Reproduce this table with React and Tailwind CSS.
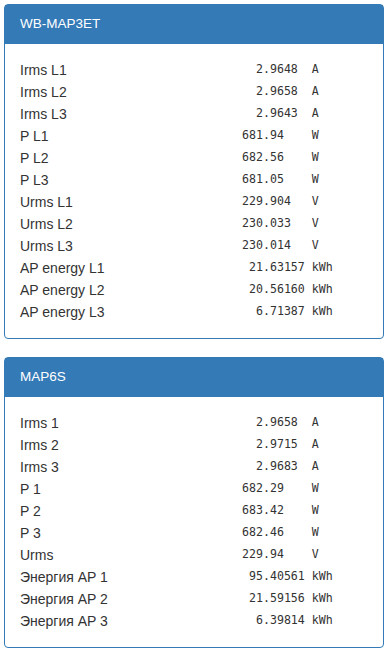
import React from 'react';

const panels = [
  {
    title: 'WB-MAP3ET',
    rows: [
      ['Irms L1', '2.9648', 'A'],
      ['Irms L2', '2.9658', 'A'],
      ['Irms L3', '2.9643', 'A'],
      ['P L1', '681.94', 'W'],
      ['P L2', '682.56', 'W'],
      ['P L3', '681.05', 'W'],
      ['Urms L1', '229.904', 'V'],
      ['Urms L2', '230.033', 'V'],
      ['Urms L3', '230.014', 'V'],
      ['AP energy L1', '21.63157', 'kWh'],
      ['AP energy L2', '20.56160', 'kWh'],
      ['AP energy L3', '6.71387', 'kWh'],
    ],
  },
  {
    title: 'MAP6S',
    rows: [
      ['Irms 1', '2.9658', 'A'],
      ['Irms 2', '2.9715', 'A'],
      ['Irms 3', '2.9683', 'A'],
      ['P 1', '682.29', 'W'],
      ['P 2', '683.42', 'W'],
      ['P 3', '682.46', 'W'],
      ['Urms', '229.94', 'V'],
      ['Энергия AP 1', '95.40561', 'kWh'],
      ['Энергия AP 2', '21.59156', 'kWh'],
      ['Энергия AP 3', '6.39814', 'kWh'],
    ],
  },
];

// decimal-aligned value in monospace
const fmt = (value, unit) => {
  const [int, dec] = value.split('.');
  return int.padStart(3, ' ') + '.' + dec.padEnd(5, ' ') + ' ' + unit;
};

function Panel({ title, rows }) {
  return (
    <div className="mb-[18px] border border-[#337ab7] rounded-[4px] bg-white">
      <div className="h-[39px] bg-[#337ab7] px-[15px] flex items-center text-white text-[13.5px]">
        {title}
      </div>
      <div className="py-[15px] px-[15px]">
        {rows.map(([label, value, unit]) => (
          <div key={label} className="flex items-center h-[22px]">
            <div className="w-[222px] text-[14px] text-[#333]">{label}</div>
            <div className="whitespace-pre text-[11.6px] text-[#333]" style={{ fontFamily: '"DejaVu Sans Mono", monospace' }}>
              {fmt(value, unit)}
            </div>
          </div>
        ))}
      </div>
    </div>
  );
}

export default function App() {
  return (
    <div className="min-h-screen bg-white pt-1 pl-1" style={{ fontFamily: '"Liberation Sans", Arial, sans-serif' }}>
      <div className="w-[380px]">
        {panels.map(p => <Panel key={p.title} {...p} />)}
      </div>
    </div>
  );
}
